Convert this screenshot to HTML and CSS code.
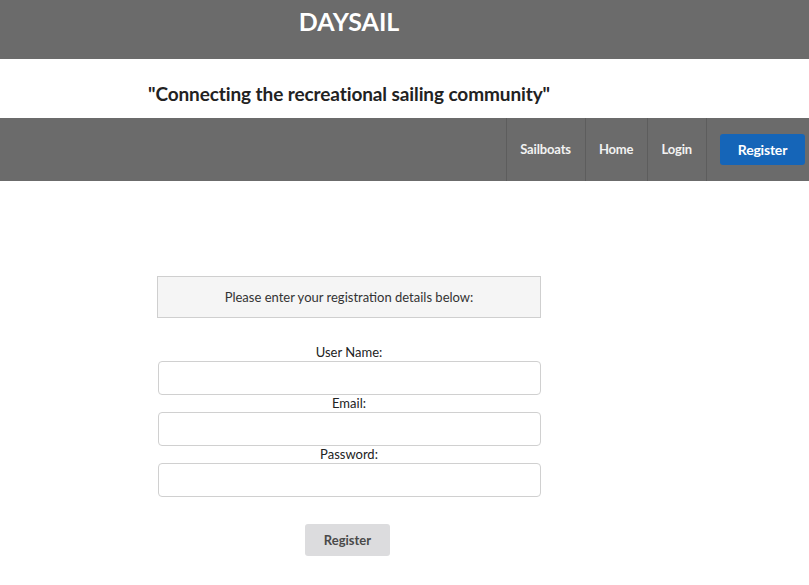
FILE: index.html
```html
<!DOCTYPE html>
<html>
<head>
<meta charset="utf-8">
<link rel="stylesheet" href="styles.css">
</head>
<body>
<header class="top">
  <div class="col"><h1 class="brand">DAYSAIL</h1></div>
</header>
<div class="tagline">
  <div class="col"><p class="quote">"Connecting the recreational sailing community"</p></div>
</div>
<nav class="nav">
  <ul class="menu">
    <li class="item"><a href="#">Sailboats</a></li>
    <li class="item"><a href="#">Home</a></li>
    <li class="item"><a href="#">Login</a></li>
    <li class="item item-btn"><a class="btn-primary" href="#">Register</a></li>
  </ul>
</nav>
<main class="col content">
  <form class="form">
    <div class="notice">Please enter your registration details below:</div>
    <label class="label" for="u">User Name:</label>
    <input class="field" id="u" type="text">
    <label class="label" for="e">Email:</label>
    <input class="field" id="e" type="text">
    <label class="label" for="p">Password:</label>
    <input class="field" id="p" type="password">
    <button class="btn-submit" type="button">Register</button>
  </form>
</main>
</body>
</html>
```
FILE: styles.css
```css
* { box-sizing: border-box; }
html, body { margin: 0; padding: 0; }
body {
  font-family: Lato, "Open Sans", sans-serif;
  color: #222;
  background: #fff;
  width: 809px;
}
.col {
  width: 698px;
  display: flex;
  flex-direction: column;
  align-items: center;
}
.top {
  background: #6b6b6b;
  height: 59px;
}
.brand {
  margin: 0;
  padding-top: 6px;
  font-size: 25px;
  font-weight: 700;
  color: #fff;
  line-height: 30px;
  letter-spacing: 0;
}
.tagline {
  height: 59px;
  background: #fff;
}
.quote {
  margin: 0;
  padding-top: 22px;
  font-size: 19px;
  font-weight: 700;
  line-height: 25px;
  color: #222;
  letter-spacing: -0.1px;
}
.nav {
  background: #6b6b6b;
  height: 63px;
  display: flex;
  justify-content: flex-end;
}
.menu {
  list-style: none;
  margin: 0;
  padding: 0;
  display: flex;
  height: 63px;
  margin-right: 4px;
}
.item {
  border-left: 1px solid #5d5d5d;
  display: flex;
  align-items: center;
  padding: 0 14px 0 13px;
}
.item a {
  color: #f2f2f2;
  text-decoration: none;
  font-size: 13px;
  font-weight: 700;
  letter-spacing: -0.15px;
  margin-top: -2px;
}
.item-btn { padding: 0 0 0 13px; }
.item .btn-primary {
  display: block;
  width: 85px;
  height: 31px;
  line-height: 31px;
  text-align: center;
  background: #1565b8;
  border-radius: 3px;
  color: #fff;
  font-size: 14px;
  margin-top: -1px;
  letter-spacing: -0.2px;
}
.content { padding-top: 95px; }
.form {
  width: 384px;
  display: flex;
  flex-direction: column;
  align-items: center;
}
.notice {
  width: 384px;
  height: 42px;
  background: #f5f5f5;
  border: 1px solid #cfcfcf;
  font-size: 13px;
  color: #333;
  display: flex;
  align-items: center;
  justify-content: center;
  margin-bottom: 26px;
}
.label {
  font-size: 13px;
  color: #222;
  line-height: 17px;
}
.field {
  width: 383px;
  margin-left: 1px;
  height: 34px;
  border: 1px solid #d0d0d0;
  border-radius: 4px;
  background: #fff;
  margin-bottom: 0;
  margin-top: 0;
  font-family: inherit;
}
.btn-submit {
  margin-top: 27px;
  margin-right: 3px;
  width: 85px;
  height: 32px;
  background: #dcdcde;
  border: none;
  border-radius: 3px;
  font-family: inherit;
  font-size: 13px;
  font-weight: 700;
  color: #4a4a4a;
}
```
